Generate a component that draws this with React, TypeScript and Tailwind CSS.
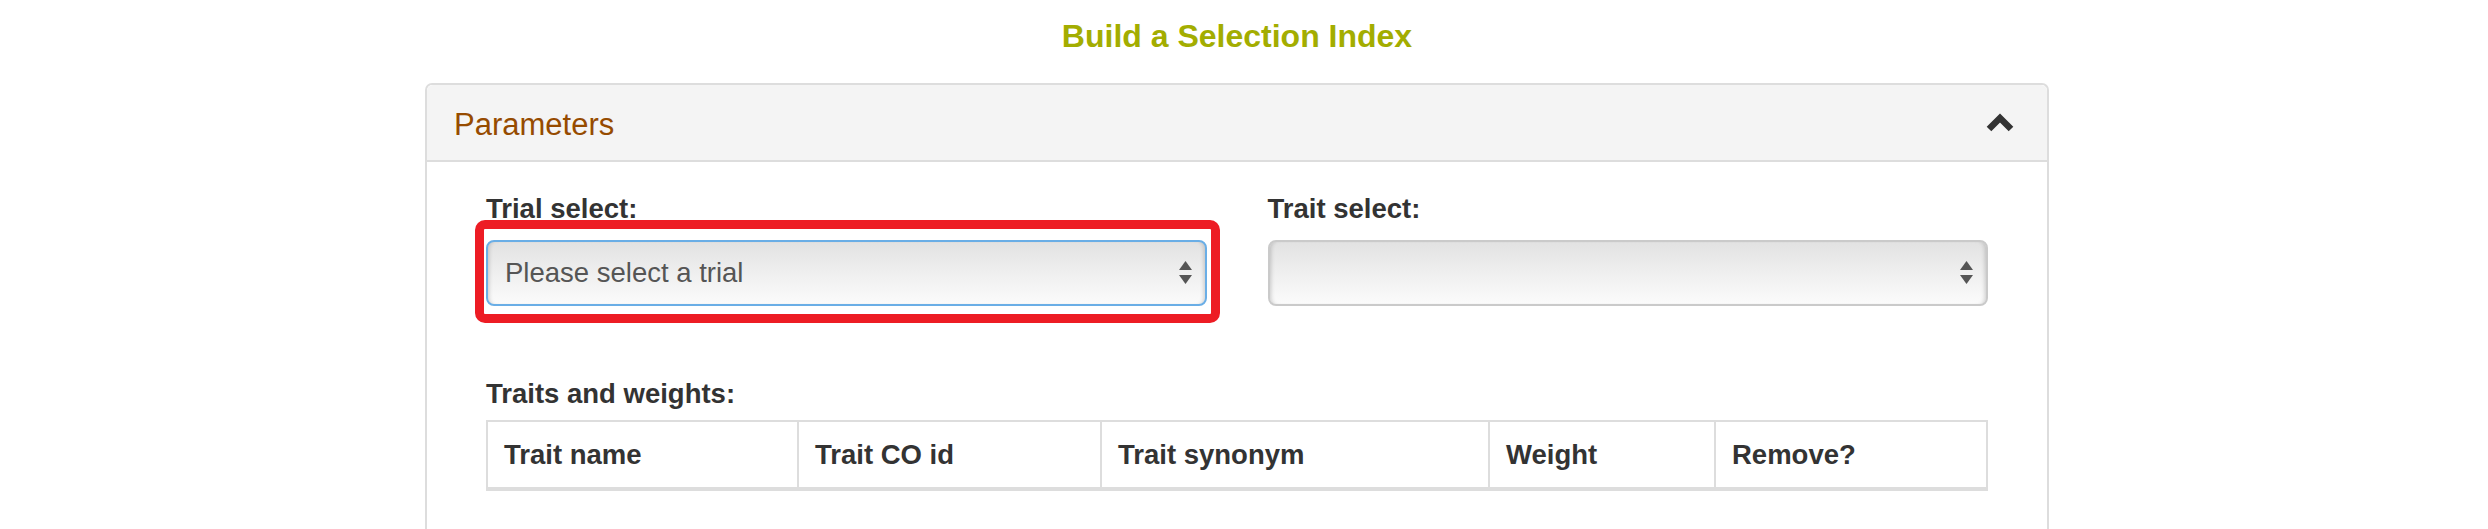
import { useState } from "react";

const font = { fontFamily: '"Liberation Sans", Arial, sans-serif' };

function SelectArrows() {
  return (
    <svg width="13" height="24" viewBox="0 0 13 24" className="shrink-0">
      <polygon points="0,9 6.5,0 13,9" fill="#555" />
      <polygon points="0,14 13,14 6.5,23" fill="#555" />
    </svg>
  );
}

function FakeSelect({ value, focused }: { value?: string; focused?: boolean }) {
  return (
    <div
      className={
        "flex h-[66px] items-center justify-between rounded-[8px] border-2 bg-gradient-to-b from-[#e2e2e2] via-[#efefef] to-[#fbfbfb] pl-[17px] pr-[13px] shadow-[inset_4px_0_4px_-3px_rgba(0,0,0,0.18),inset_-4px_0_4px_-3px_rgba(0,0,0,0.18)] " +
        (focused ? "border-[#6aaee6]" : "border-[#cacaca]")
      }
    >
      <span className="pb-[2px] text-[27.5px] leading-[27px] text-[#555]">{value}</span>
      <SelectArrows />
    </div>
  );
}

export default function App() {
  const [open, setOpen] = useState(true);
  const traits = ["Trait name", "Trait CO id", "Trait synonym", "Weight", "Remove?"];

  return (
    <div className="min-h-[529px] bg-white" style={font}>
      <div className="w-[2474px]">
        <h1 className="pt-[20px] pb-[31px] text-center text-[32px] leading-[32px] font-bold text-[#a3ad00]">
          Build a Selection Index
        </h1>

        <div className="mx-auto w-[1624px] rounded-t-[7px] border-2 border-b-0 border-[#dddddd] min-h-[460px]">
          <div
            className="flex h-[77px] items-center justify-between rounded-t-[6px] border-b-2 border-[#dddddd] bg-[#f4f4f4] pt-[3px] pl-[27px] pr-[33px] cursor-pointer"
            onClick={() => setOpen(!open)}
          >
            <span className="text-[31px] leading-[31px] text-[#964b00]">Parameters</span>
            <svg width="28" height="20" viewBox="0 0 28 20" className="-mt-[3px]">
              <polyline
                points="3,16 14,5 25,16"
                fill="none"
                stroke="#333"
                strokeWidth="6.5"
                strokeLinejoin="miter"
              />
            </svg>
          </div>

          {open && (
            <div className="px-[59px] pt-[33px] pb-[40px] text-[#333]">
              <div className="grid grid-cols-2 gap-x-[61px]">
                <div>
                  <div className="text-[27.5px] leading-[27px] font-bold">Trial select:</div>
                  <div className="relative mt-[18px]">
                    <FakeSelect value="Please select a trial" focused />
                    <div className="pointer-events-none absolute -top-[20px] -right-[13px] -bottom-[17px] -left-[11px] rounded-[10px] border-[9px] border-[#ed1c24]" />
                  </div>
                </div>
                <div>
                  <div className="text-[27.5px] leading-[27px] font-bold">Trait select:</div>
                  <div className="mt-[18px]">
                    <FakeSelect />
                  </div>
                </div>
              </div>

              <div className="mt-[74px] text-[27.5px] leading-[27px] font-bold">Traits and weights:</div>

              <table className="mt-[13px] w-full table-fixed border-collapse">
                <colgroup>
                  <col className="w-[311px]" />
                  <col className="w-[303px]" />
                  <col className="w-[388px]" />
                  <col className="w-[226px]" />
                  <col />
                </colgroup>
                <thead>
                  <tr className="border-t-2 border-b-4 border-[#dddddd]">
                    {traits.map((t) => (
                      <th
                        key={t}
                        className="border-x-2 border-[#dddddd] px-[16px] py-[19px] text-left text-[27.5px] leading-[27px] font-bold text-[#333]"
                      >
                        {t}
                      </th>
                    ))}
                  </tr>
                </thead>
              </table>
            </div>
          )}
        </div>
      </div>
    </div>
  );
}
